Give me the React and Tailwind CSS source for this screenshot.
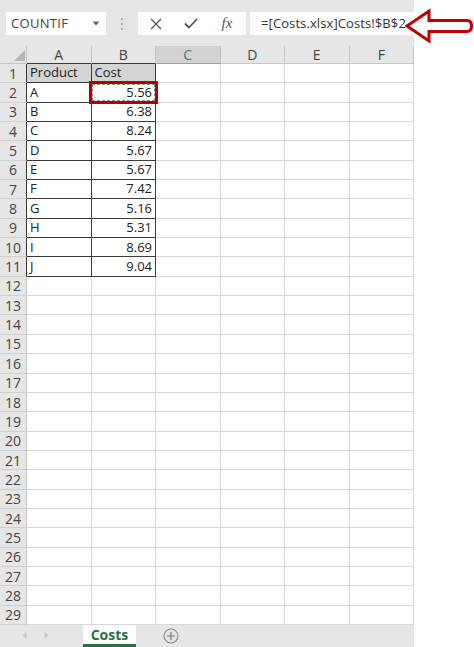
import React from "react";

const data = [
  ["Product", "Cost"],
  ["A", "5.56"],
  ["B", "6.38"],
  ["C", "8.24"],
  ["D", "5.67"],
  ["E", "5.67"],
  ["F", "7.42"],
  ["G", "5.16"],
  ["H", "5.31"],
  ["I", "8.69"],
  ["J", "9.04"],
];

const cols = ["A", "B", "C", "D", "E", "F"];

function Row({ n }) {
  const inTable = n <= 11;
  const d = inTable ? data[n - 1] : null;
  return (
    <div className="flex h-[19.345px]">
      <div
        className={
          "w-[27px] shrink-0 bg-[#e6e6e6] border-b border-[#d0d0d0] border-r flex items-center justify-center text-[14px] text-[#444] " +
          (inTable ? "border-r-[#3a3a3a]" : "border-r-[#c6c6c6]")
        }
      >
        {n}
      </div>
      <div
        className={
          "w-[64.5px] shrink-0 border-r border-b flex items-center px-[3px] text-[13px] text-[#222] " +
          (inTable ? "border-r-[#3a3a3a] " : "border-r-[#d8d8d8] ") +
          (inTable ? "border-b-[#3a3a3a] " : "border-b-[#d8d8d8] ") +
          (n === 1 ? "bg-[#d4d4d4]" : "bg-white")
        }
      >
        {d ? d[0] : ""}
      </div>
      <div
        className={
          "relative w-[64.5px] shrink-0 border-r border-b flex items-center px-[3px] text-[13px] text-[#222] " +
          (inTable ? "border-r-[#3a3a3a] " : "border-r-[#d8d8d8] ") +
          (inTable ? "border-b-[#3a3a3a] " : "border-b-[#d8d8d8] ") +
          (n === 1 ? "bg-[#d4d4d4] justify-start" : "bg-white justify-end")
        }
      >
        {d ? d[1] : ""}
        {n === 2 && (
          <div className="absolute left-[-3px] top-[-2px] right-[-3px] bottom-[-2px] border-[3px] border-[#b40000] z-10">
            <div className="absolute inset-[0px] border border-dashed border-[#7a9a7a]" />
          </div>
        )}
      </div>
      {cols.slice(2).map((c) => (
        <div
          key={c}
          className="w-[64.5px] shrink-0 border-r border-b border-[#d8d8d8] bg-white"
        />
      ))}
    </div>
  );
}

export default function App() {
  const rows = Array.from({ length: 29 }, (_, i) => i + 1);
  return (
    <div
      className="relative w-[474px] h-[647px] bg-white overflow-hidden"
      style={{ fontFamily: '"Open Sans", "Noto Sans", sans-serif' }}
    >
      <div className="w-[414px] flex flex-col">
        <div className="h-[46px] bg-[#e6e6e6] flex items-start pt-[12px]">
          <div className="ml-[6px] w-[100px] h-[23px] bg-white flex items-center pl-[5px] pr-[6px] justify-between">
            <span className="text-[13px] text-[#444] tracking-[0.3px]">COUNTIF</span>
            <svg width="8" height="5" viewBox="0 0 8 5">
              <path d="M0.5 0.5 L7.5 0.5 L4 4.5 Z" fill="#666" />
            </svg>
          </div>
          <div className="w-[32px] h-[23px] flex flex-col items-center justify-center gap-[3px]">
            <div className="w-[2px] h-[2px] bg-[#999] rounded-full" />
            <div className="w-[2px] h-[2px] bg-[#999] rounded-full" />
            <div className="w-[2px] h-[2px] bg-[#999] rounded-full" />
          </div>
          <div className="w-[108px] h-[23px] bg-white flex items-center">
            <div className="w-[34px] flex justify-center ml-[1px]">
              <svg width="12" height="12" viewBox="0 0 12 12">
                <path d="M1 1 L11 11 M11 1 L1 11" stroke="#555" strokeWidth="1.3" />
              </svg>
            </div>
            <div className="w-[36px] flex justify-center">
              <svg width="14" height="11" viewBox="0 0 14 11">
                <path d="M1 5.5 L5 9.5 L13 1" stroke="#555" strokeWidth="1.8" fill="none" />
              </svg>
            </div>
            <div className="w-[36px] flex justify-center">
              <span
                className="text-[15px] italic text-[#555] leading-none"
                style={{ fontFamily: '"Liberation Serif", "DejaVu Serif", serif' }}
              >
                fx
              </span>
            </div>
          </div>
          <div className="ml-[4px] flex-1 h-[23px] bg-white flex items-center pl-[11px]">
            <span className="text-[13px] text-[#333] whitespace-nowrap tracking-[0.1px]">=[Costs.xlsx]Costs!$B$2</span>
          </div>
        </div>

        <div className="flex h-[18px]">
          <div className="relative w-[27px] shrink-0 bg-[#e6e6e6] border-r border-b border-[#c6c6c6]">
            <svg className="absolute left-[14px] top-[4px]" width="11" height="11" viewBox="0 0 11 11">
              <path d="M11 0 L11 11 L0 11 Z" fill="#b5b5b5" />
            </svg>
          </div>
          {cols.map((c, i) => (
            <div
              key={c}
              className={
                "w-[64.5px] shrink-0 border-r border-b flex items-center justify-center text-[14px] " +
                (c === "C"
                  ? "bg-[#d2d2d2] text-[#4f7a5e] border-r-[#bdbdbd] border-b-[#a0a0a0]"
                  : "bg-[#e6e6e6] text-[#444] border-r-[#c6c6c6] " +
                    (i < 2 ? "border-b-[#3a3a3a]" : "border-b-[#c6c6c6]"))
              }
            >
              {c}
            </div>
          ))}
        </div>

        {rows.map((n) => (
          <Row key={n} n={n} />
        ))}

        <div className="h-[22px] bg-[#e6e6e6] flex items-stretch">
          <div className="w-[83px] flex items-center pl-[22px] gap-[17px]">
            <svg width="5" height="7" viewBox="0 0 5 7">
              <path d="M4.5 0 L0.5 3.5 L4.5 7 Z" fill="#c8c8c8" />
            </svg>
            <svg width="5" height="7" viewBox="0 0 5 7">
              <path d="M0.5 0 L4.5 3.5 L0.5 7 Z" fill="#c8c8c8" />
            </svg>
          </div>
          <div className="w-[53px] bg-white border-b-[3px] border-[#217346] flex items-center justify-center pt-[2px]">
            <span className="text-[14px] font-bold text-[#217346] leading-none">Costs</span>
          </div>
          <div className="ml-[27px] flex items-center">
            <svg width="16" height="16" viewBox="0 0 16 16">
              <circle cx="8" cy="8" r="7" fill="none" stroke="#888" strokeWidth="1.1" />
              <path d="M8 4 L8 12 M4 8 L12 8" stroke="#777" strokeWidth="1.2" />
            </svg>
          </div>
        </div>
      </div>

      <svg
        className="absolute left-[404px] top-[8px]"
        width="70"
        height="36"
        viewBox="0 0 70 36"
      >
        <path
          d="M3 18 L25 3 L25 12.5 L63 12.5 Q67.5 12.5 67.5 18 Q67.5 23.5 63 23.5 L25 23.5 L25 33 Z"
          fill="white"
          stroke="#c00000"
          strokeWidth="3"
          strokeLinejoin="miter"
        />
      </svg>
    </div>
  );
}
